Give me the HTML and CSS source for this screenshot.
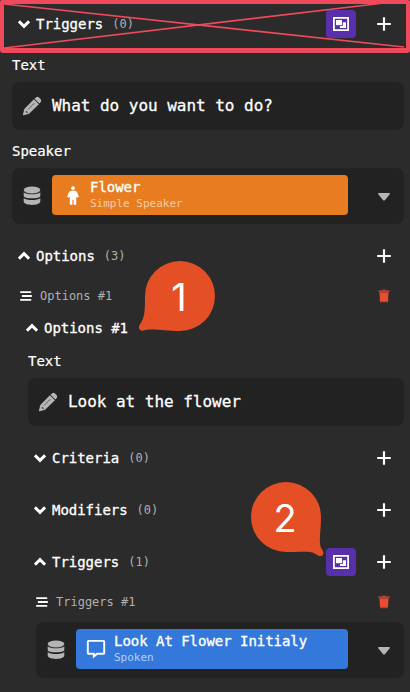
FILE: index.html
```
<!DOCTYPE html>
<html lang="en">
<head>
<meta charset="utf-8">
<title>Inspector</title>
<link rel="stylesheet" href="styles.css">
</head>
<body>
<svg class="defs" width="0" height="0" aria-hidden="true">
  <symbol id="down" viewBox="0 0 12 12"><path d="M.9 3.400 6 8.400 11.100 3.400" fill="none" stroke="currentColor" stroke-width="3"/></symbol>
  <symbol id="up" viewBox="0 0 12 12"><path d="M.9 8.600 6 3.600 11.100 8.600" fill="none" stroke="currentColor" stroke-width="3"/></symbol>
  <symbol id="plus" viewBox="0 0 14 14"><path d="M7 .2V13.800M.2 7H13.800" stroke="currentColor" stroke-width="2.200"/></symbol>
  <symbol id="group" viewBox="0 0 16 14">
    <path d="M.9 .9H15.100V13.100H.9Z" fill="none" stroke="#fff" stroke-width="1.800"/>
    <path d="M3 3H9V8.200H3Z" fill="#fff"/>
    <path d="M9.800 5.300H13V11H7V9.100H9.800Z" fill="#fff"/>
  </symbol>
  <symbol id="pencil" viewBox="0 0 20 20">
    <path d="M1.200 19.200.9 18.700 2.300 13 11.900 3.300 16.900 8.200 7.100 17.700 1.800 19.200Z" fill="#b5b5b5"/>
    <path d="m12.500 2.700 1.400-1.300c1-.8 2.200-.7 3.100.2l1.500 1.500c.9 1 .9 2.200 0 3.100l-1.200 1.300Z" fill="#b5b5b5"/>
    <path d="m6.300 13.200 5.800-5.800" fill="none" stroke="#333" stroke-width=".9" stroke-dasharray="2.200 .8"/>
    <path d="M4.300 15v1.300h1.400" fill="none" stroke="#333" stroke-width=".9"/>
  </symbol>
  <symbol id="data" viewBox="0 0 18 20">
    <g fill="#b5b5b5"><ellipse cx="9" cy="4" rx="8.300" ry="3.400"/>
    <path d="M.7 6.200c2.600 2.700 14 2.700 16.600 0V10c0 3.100-16.600 3.100-16.600 0Z"/>
    <path d="M.7 12c2.600 2.700 14 2.700 16.600 0v3.600c0 4.500-16.600 4.500-16.600 0Z"/></g>
  </symbol>
  <symbol id="person" viewBox="0 0 12 20">
    <circle cx="6" cy="2.200" r="1.900" fill="#fff"/>
    <path d="M4.500 4.700h3c1.400 0 2.200.7 2.700 1.800l1.700 4.200-1.900 1-.8-1.500V18.800H6.600V14H5.400V18.800H2.800V10.200L2 11.700.1 10.700 1.800 6.500C2.300 5.400 3.100 4.700 4.500 4.700Z" fill="#fff"/>
  </symbol>
  <symbol id="chat" viewBox="0 0 20 20"><path d="M2.600 1.900h14.800a.8.800 0 0 1 .8.800v11.200a.8.800 0 0 1-.8.800H11.200l-3.400 2.800v-2.800H2.600a.8.800 0 0 1-.8-.8V2.700a.8.800 0 0 1 .8-.8Z" fill="none" stroke="#fff" stroke-width="1.900"/></symbol>
  <symbol id="caret" viewBox="0 0 12 8"><path d="M.8 0h10.400c.8 0 1 .8.5 1.300L7.100 6.900c-.7.800-1.500.8-2.200 0L.3 1.300C-.2.800 0 0 .8 0Z" fill="#b5b5b5"/></symbol>
  <symbol id="trash" viewBox="0 0 12 14">
    <path d="M1.500 3.500h9l-.5 9.200H2Z" fill="#e84c31"/>
    <path d="M.5 1.300h3.600l.5-.8h2.800l.5.800h3.600v1.200l-.6 1.300H1.200L.5 2.500ZM2 12.500h8v.7H2Z" fill="#b04231"/>
  </symbol>
  <symbol id="drag" viewBox="0 0 12 10"><path d="M.9 1.100h9.600M2.600 5H11.200M.9 8.900h9.600" stroke="#fff" stroke-width="1.800" stroke-linecap="round"/></symbol>
</svg>

<main class="panel">
  <header class="section section-top">
    <svg class="chev"><use href="#down"/></svg><h2>Triggers</h2><span class="count">(0)</span>
    <button class="group-btn"><svg><use href="#group"/></svg></button><svg class="plus"><use href="#plus"/></svg>
  </header>
  <div class="label">Text</div>
  <div class="field"><svg class="lead"><use href="#pencil"/></svg><span>What do you want to do?</span></div>
  <div class="label label-speaker">Speaker</div>
  <div class="picker">
    <svg class="database"><use href="#data"/></svg>
    <div class="entry entry-orange"><svg class="person"><use href="#person"/></svg><div class="entry-text"><b>Flower</b><small>Simple Speaker</small></div></div>
    <svg class="caret"><use href="#caret"/></svg>
  </div>
  <header class="section section-options">
    <svg class="chev"><use href="#up"/></svg><h2>Options</h2><span class="count">(3)</span><svg class="plus"><use href="#plus"/></svg>
  </header>
  <div class="list-row"><svg class="drag"><use href="#drag"/></svg><span>Options #1</span><svg class="trash"><use href="#trash"/></svg></div>

  <section class="nested">
    <header class="subhead"><svg class="chev"><use href="#up"/></svg><h2>Options #1</h2></header>
    <div class="label label-nested">Text</div>
    <div class="field"><svg class="lead"><use href="#pencil"/></svg><span>Look at the flower</span></div>
    <div class="groups">
      <header class="section"><svg class="chev"><use href="#down"/></svg><h2>Criteria</h2><span class="count">(0)</span><svg class="plus"><use href="#plus"/></svg></header>
      <header class="section"><svg class="chev"><use href="#down"/></svg><h2>Modifiers</h2><span class="count">(0)</span><svg class="plus"><use href="#plus"/></svg></header>
      <header class="section"><svg class="chev"><use href="#up"/></svg><h2>Triggers</h2><span class="count">(1)</span>
        <button class="group-btn"><svg><use href="#group"/></svg></button><svg class="plus"><use href="#plus"/></svg></header>
      <div class="list-row list-row-nested"><svg class="drag"><use href="#drag"/></svg><span>Triggers #1</span><svg class="trash"><use href="#trash"/></svg></div>
      <div class="picker picker-nested">
        <svg class="database"><use href="#data"/></svg>
        <div class="entry entry-blue"><svg class="chat"><use href="#chat"/></svg><div class="entry-text"><b>Look At Flower Initialy</b><small>Spoken</small></div></div>
        <svg class="caret"><use href="#caret"/></svg>
      </div>
    </div>
  </section>
</main>

<svg class="strike" viewBox="0 0 410 53">
  <path d="M4 4 404 47M4 48 380 3.500" fill="none" stroke="#ee4a5c" stroke-width="1.700"/>
  <path fill-rule="evenodd" d="M2 0H408a2 2 0 0 1 2 2V50a3 3 0 0 1-3 3H3a3 3 0 0 1-3-3V2a2 2 0 0 1 2-2ZM4 4V48H406V4Z" fill="#ee4a5c"/>
</svg>
<div class="marker marker-one">
  <svg viewBox="0 0 78 72"><path d="M42 1A35 35 0 0 1 42 71C27 71 17 68.500 7 70C3 72 -.5 69 1.500 65C7 58 7 50 7 36A35 35 0 0 1 42 1Z" fill="#e44f26"/></svg><span>1</span>
</div>
<div class="marker marker-two">
  <svg viewBox="0 0 74 76"><path d="M36 1A35 35 0 0 1 71 36C71 47 69.500 55 70 62C70 66 72 68 73.300 71C74 74.500 71 76 68 74.500C65 73 63 71 58 70.800C51 70.500 45 71 36 71A35 35 0 0 1 36 1Z" fill="#e44f26"/></svg><span>2</span>
</div>
</body>
</html>
```
FILE: styles.css
```
* { box-sizing: border-box; }
body {
  position: relative;
  width: 410px;
  height: 692px;
  margin: 0;
  overflow: hidden;
  background: #2b2b2b;
  color: #fff;
  font: 14px/20px "DejaVu Sans Mono", monospace;
}
svg { display: block; flex: none; }
.defs { position: absolute; }
.panel { padding: 0 6px 0 12px; }
h2 { margin: 0; font-size: 14px; font-weight: 400; letter-spacing: -.03px; -webkit-text-stroke: .3px #fff; }
.section { display: flex; align-items: center; height: 52px; padding: 0 13px 0 6px; }
.section-top { height: 48px; }
.section-options { margin-top: 6px; }
.chev { width: 12px; height: 12px; margin-right: 6px; }
.count { margin-left: 9px; color: #b0b0b0; font-size: 12px; }
.plus { width: 14px; height: 14px; margin-left: auto; }
.group-btn {
  display: grid;
  place-items: center;
  width: 30px;
  height: 28px;
  margin-left: auto;
  padding: 0;
  border: 0;
  border-radius: 4px;
  background: #5930ab;
}
.group-btn svg { width: 16px; height: 14px; }
.group-btn + .plus { margin-left: 21px; }
.label { height: 34px; padding-top: 7px; letter-spacing: -.03px; -webkit-text-stroke: .2px #fff; }
.label-speaker { height: 38px; padding-top: 11px; }
.label-nested { height: 32px; padding-top: 5px; }
.field {
  display: flex;
  align-items: center;
  height: 48px;
  padding-left: 10px;
  border-radius: 8px;
  background: #222;
  font-size: 16px;
  letter-spacing: -.03px;
  -webkit-text-stroke: .3px #fff;
}
.lead { width: 20px; height: 20px; margin-right: 10px; }
.picker {
  display: flex;
  align-items: center;
  height: 56px;
  padding: 0 14px 0 11px;
  border-radius: 8px;
  background: #222;
}
.database { width: 18px; height: 20px; margin-right: 11px; }
.entry { display: flex; align-items: center; width: 296px; height: 40px; margin-bottom: 2px; border-radius: 4px; }
.entry-orange { background: #e87c20; }
.entry-blue { width: 272px; background: #3478dc; }
.person { width: 12px; height: 20px; margin: 1px 11px 0 15px; }
.entry-text { display: flex; flex-direction: column; }
.entry-text b { height: 18px; font-size: 14px; line-height: 19px; font-weight: 400; letter-spacing: -.03px; -webkit-text-stroke: .35px #fff; }
.entry-text small { font-size: 11px; line-height: 16px; height: 17px; }
.entry-orange small { color: #f7cda5; }
.entry-blue small { color: #b2d0f5; }
.caret { width: 12px; height: 8px; margin: 2px 0 0 auto; }
.list-row { display: flex; align-items: center; height: 28px; padding: 0 14px 0 8px; color: #b0b0b0; font-size: 12px; }
.drag { width: 12px; height: 10px; margin-right: 8px; }
.trash { width: 12px; height: 14px; margin-left: auto; }
.nested { padding-left: 16px; }
.subhead { display: flex; align-items: center; height: 36px; margin-left: -2px; }
.groups { padding-top: 6px; }
.list-row-nested { margin-bottom: 6px; }
.picker-nested { margin-left: 8px; }
.chat { width: 20px; height: 20px; margin: 0 8px 0 10px; }
.strike { position: absolute; top: 0; left: 0; width: 410px; height: 53px; }
.marker { position: absolute; font: 400 38px/72px Inter, "Liberation Sans", sans-serif; }
.marker span { position: absolute; top: 1px; width: 40px; text-align: center; }
.marker-one { left: 138px; top: 260px; width: 78px; height: 72px; }
.marker-one span { left: 21px; }
.marker-two { left: 250px; top: 481px; width: 74px; height: 76px; }
.marker-two span { left: 15px; }
```
